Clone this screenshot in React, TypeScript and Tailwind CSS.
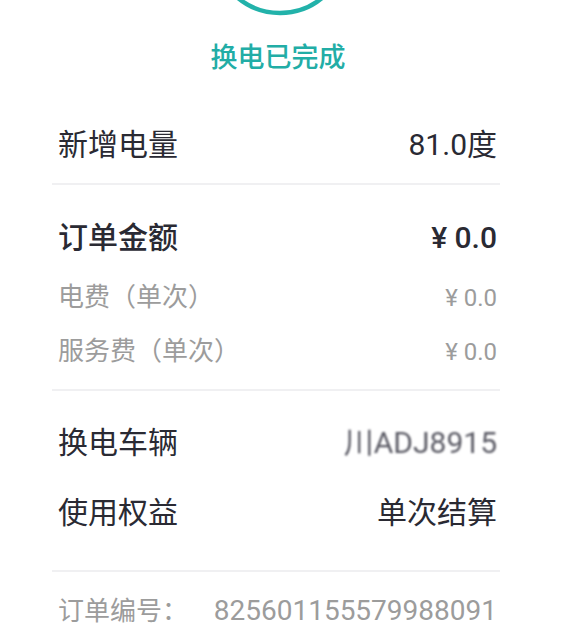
import React from "react";

const font = { fontFamily: '"Roboto", "Noto Sans CJK SC", sans-serif' };

function Row({
  label,
  value,
  className,
}: {
  label: string;
  value: React.ReactNode;
  className: string;
}) {
  return (
    <div className={`flex items-center justify-between pl-[6px] pr-[3px] ${className}`}>
      <span>{label}</span>
      <span>{value}</span>
    </div>
  );
}

function Divider({ className }: { className: string }) {
  return <div className={`h-[2px] bg-[#f0f0f2] ${className}`} />;
}

export default function App() {
  return (
    <div className="w-[569px] h-[644px] bg-white overflow-hidden" style={font}>
      <div className="flex justify-center pr-[10px]">
        <svg width="160" height="16" viewBox="0 0 160 16">
          <circle cx="80" cy="-53" r="66" fill="none" stroke="#22b2aa" strokeWidth="4.5" />
        </svg>
      </div>
      <div className="mt-[24px] h-[36px] leading-[36px] text-center pr-[13px] text-[27px] font-medium text-[#22ada6]">
        换电已完成
      </div>

      <div className="ml-[52px] w-[448px] text-[#2a2a33]">
        <Row
          className="mt-[48px] h-[40px] text-[30px]"
          label="新增电量"
          value="81.0度"
        />
        <Divider className="mt-[19px]" />

        <Row
          className="mt-[32px] h-[40px] text-[30px] font-medium"
          label="订单金额"
          value="¥ 0.0"
        />
        <Row
          className="mt-[13px] h-[54px] text-[26px] text-[#9c9c9c]"
          label="电费（单次）"
          value={<span className="text-[24px]">¥ 0.0</span>}
        />
        <Row
          className="h-[54px] text-[26px] text-[#9c9c9c]"
          label="服务费（单次）"
          value={<span className="text-[24px]">¥ 0.0</span>}
        />
        <Divider className="mt-[11px]" />

        <Row
          className="mt-[31px] h-[40px] text-[30px]"
          label="换电车辆"
          value={<span className="inline-block text-[#5a5a64] blur-[0.8px]">川ADJ8915</span>}
        />
        <Row
          className="mt-[30px] h-[40px] text-[30px]"
          label="使用权益"
          value="单次结算"
        />
        <Divider className="mt-[38px]" />

        <Row
          className="mt-[21px] h-[36px] text-[26px] text-[#9c9c9c]"
          label="订单编号："
          value={<span className="text-[28px]">825601155579988091</span>}
        />
      </div>
    </div>
  );
}
